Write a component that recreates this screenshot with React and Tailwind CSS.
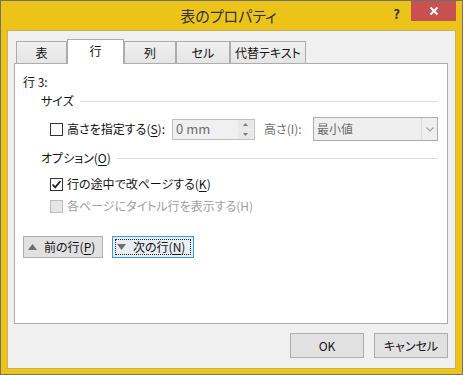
import React from "react";

const Tab = ({ label, active }) =>
  active ? (
    <div className="relative z-10 -mb-px flex h-[25px] w-[57px] items-start justify-center border border-b-0 border-[#ACACAC] bg-white pt-[3px] leading-[16px]">
      {label}
    </div>
  ) : (
    <div className="flex h-[22px] items-center justify-center border border-b-0 border-[#ACACAC] bg-gradient-to-b from-[#F0F0F0] to-[#E5E5E5] leading-[16px]">
      {label}
    </div>
  );

const Group = ({ label }) => (
  <div className="flex h-[16px] items-center pl-[26px] pr-[9px] leading-[16px]">
    <span>{label}</span>
    <div className="ml-[6px] h-px flex-1 bg-[#DCDCDC]" />
  </div>
);

const Check = ({ checked, disabled }) => (
  <div
    className={
      "flex h-[13px] w-[13px] items-center justify-center border " +
      (disabled ? "border-[#BCBCBC] bg-[#E6E6E6]" : "border-[#333333] bg-white")
    }
  >
    {checked && (
      <svg width="11" height="11" viewBox="0 0 11 11">
        <path d="M1.5 5.5 L4.2 8.3 L9.5 2" stroke="#222" strokeWidth="1.8" fill="none" />
      </svg>
    )}
  </div>
);

const U = ({ children }) => <span className="underline underline-offset-2">{children}</span>;

export default function App() {
  return (
    <div className="flex h-[375px] w-[463px] flex-col border border-[#707070] bg-[#ECC318] text-[12px] text-[#111] [font-family:'Noto_Sans_CJK_JP',sans-serif] [font-feature-settings:'palt']">
      {/* title bar */}
      <div className="grid h-[29px] grid-cols-[1fr_auto_1fr] pr-[6px]">
        <div />
        <div className="flex items-center text-[15px] leading-[20px] text-[#333]">表のプロパティ</div>
        <div className="flex items-start justify-end">
          <span className="mr-[11px] mt-[5px] text-[13px] font-bold leading-[16px] text-[#333]">?</span>
          <div className="flex h-[20px] w-[45px] items-center justify-center bg-[#C75050]">
            <svg width="10" height="10" viewBox="0 0 10 10">
              <path d="M1.5 1.5 L8.5 8.5 M8.5 1.5 L1.5 8.5" stroke="#fff" strokeWidth="2" />
            </svg>
          </div>
        </div>
      </div>

      {/* client area */}
      <div className="mx-[6px] flex h-[339px] flex-col border border-[#C6B060] bg-[#F0F0F0] px-[6px] pt-[8px]">
        <div className="ml-[2px] flex items-end">
          <div className="w-[51px]"><Tab label="表" /></div>
          <Tab label="行" active />
          <div className="w-[52px]"><Tab label="列" /></div>
          <div className="w-[54px]"><Tab label="セル" /></div>
          <div className="w-[76px]"><Tab label="代替テキスト" /></div>
        </div>

        <div className="flex h-[261px] w-[434px] flex-col border border-[#ACACAC] bg-white pt-[10px]">
          <div className="pl-[8px] leading-[16px]">行 3:</div>

          <div className="mt-[3px]">
            <Group label="サイズ" />
          </div>

          <div className="mt-[8px] flex h-[24px] items-center pl-[35px]">
            <Check />
            <span className="ml-[4px] w-[105px] leading-[16px]">
              高さを指定する(<U>S</U>):
            </span>
            <div className="flex h-[21px] w-[83px] items-center border border-[#BFBFBF] bg-[#F0F0F0]">
              <span className="flex-1 pl-[3px] text-[13px] text-[#6D6D6D] leading-[16px]">0 mm</span>
              <div className="mr-px flex h-[19px] w-[15px] flex-col gap-px">
                <div className="flex flex-1 items-center justify-center bg-[#E8E8E8]">
                  <svg width="5" height="3" viewBox="0 0 5 3"><path d="M0 3 L2.5 0 L5 3Z" fill="#7A7A7A" /></svg>
                </div>
                <div className="flex flex-1 items-center justify-center bg-[#E8E8E8]">
                  <svg width="5" height="3" viewBox="0 0 5 3"><path d="M0 0 L2.5 3 L5 0Z" fill="#7A7A7A" /></svg>
                </div>
              </div>
            </div>
            <span className="ml-[9px] w-[49px] text-[#6D6D6D] leading-[16px]">高さ(I):</span>
            <div className="flex h-[24px] w-[125px] items-center border border-[#ACACAC] bg-[#EFEFEF]">
              <span className="flex-1 pl-[3px] text-[#6D6D6D] leading-[16px]">最小値</span>
              <div className="flex h-full w-[16px] items-center justify-center border-l border-[#DADADA]">
                <svg width="8" height="5" viewBox="0 0 8 5">
                  <path d="M0.5 0.5 L4 4 L7.5 0.5" stroke="#A0A0A0" strokeWidth="1.1" fill="none" />
                </svg>
              </div>
            </div>
          </div>

          <div className="mt-[9px]">
            <Group label={<>オプション(<U>O</U>)</>} />
          </div>

          <div className="mt-[10px] flex h-[16px] items-center pl-[35px]">
            <Check checked />
            <span className="ml-[4px] leading-[16px]">
              行の途中で改ページする(<U>K</U>)
            </span>
          </div>

          <div className="mt-[6px] flex h-[16px] items-center pl-[35px]">
            <Check disabled />
            <span className="ml-[4px] leading-[16px] text-[#A0A0A0]">各ページにタイトル行を表示する(H)</span>
          </div>

          <div className="mt-[22px] flex pl-[8px]">
            <div className="flex h-[22px] w-[80px] items-center border border-[#ADADAD] bg-[#E1E1E1] pl-[4px]">
              <svg width="9" height="6" viewBox="0 0 9 6"><path d="M0 6 L4.5 0 L9 6Z" fill="#6E6E6E" /></svg>
              <span className="ml-[7px] leading-[16px]">
                前の行(<U>P</U>)
              </span>
            </div>
            <div className="ml-[9px] flex h-[22px] w-[82px] items-center border border-[#3399FF] bg-[#E9EEF3] p-[2px]">
              <div className="flex h-full w-full items-center border border-dotted border-[#222] pl-[1px]">
                <svg width="9" height="6" viewBox="0 0 9 6"><path d="M0 0 L4.5 6 L9 0Z" fill="#6E6E6E" /></svg>
                <span className="ml-[7px] leading-[16px]">
                  次の行(<U>N</U>)
                </span>
              </div>
            </div>
          </div>
        </div>

        <div className="mt-[9px] flex justify-end gap-[10px] pr-px">
          <div className="flex h-[25px] w-[74px] items-center justify-center border border-[#ADADAD] bg-[#E1E1E1] leading-[16px]">OK</div>
          <div className="flex h-[25px] w-[74px] items-center justify-center border border-[#ADADAD] bg-[#E1E1E1] leading-[16px]">キャンセル</div>
        </div>
      </div>
    </div>
  );
}
